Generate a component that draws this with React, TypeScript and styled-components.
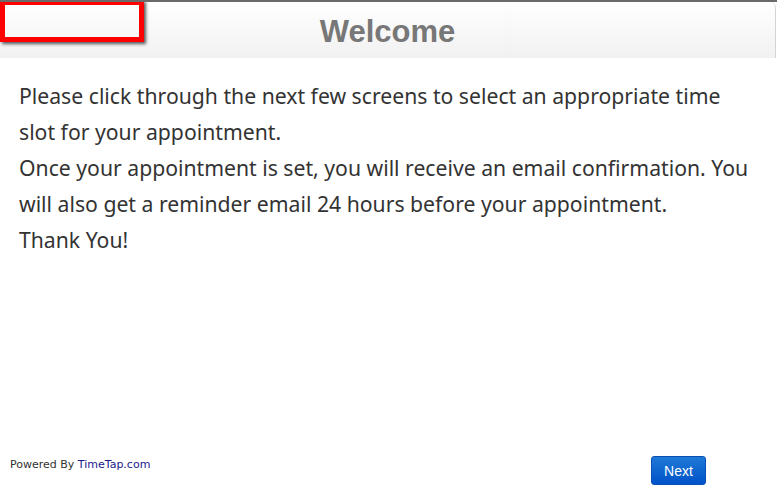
import React from "react";
import styled, { createGlobalStyle } from "styled-components";

const GlobalStyle = createGlobalStyle`
    html, body {
        margin: 0;
        padding: 0;
        height: 100%;
        background: #ffffff;
    }

    #root {
        height: 100%;
    }
`;

const Page = styled.div`
    display: flex;
    flex-direction: column;
    height: 100vh;
    box-sizing: border-box;
    border-top: 2px solid #6a6a6a;
    overflow: hidden;
`;

const Header = styled.header`
    display: grid;
    grid-template-columns: 1fr auto 1fr;
    align-items: center;
    height: 56px;
    margin-right: 1px;
    border-right: 1px solid #d4d4d4;
    border-top-right-radius: 6px;
    background: linear-gradient(to bottom, #ffffff 0%, #f1f1f1 100%);
`;

const LogoFrame = styled.div`
    align-self: start;
    width: 134px;
    height: 32px;
    margin-top: -2px;
    border: 5px solid #ff0000;
    box-shadow: 2px 2px 3px rgba(0, 0, 0, 0.65);
`;

const Title = styled.h1`
    margin: 0;
    padding-top: 3px;
    font-family: "Liberation Sans", Arial, sans-serif;
    font-size: 31px;
    font-weight: bold;
    color: #777777;
`;

const Content = styled.main`
    flex: 1;
    width: 734px;
    padding: 20px 19px 0 19px;
    font-family: "Noto Sans", "Open Sans", sans-serif;
    font-size: 21.2px;
    line-height: 36px;
    color: #333333;

    p {
        margin: 0;
    }
`;

const Footer = styled.footer`
    display: flex;
    justify-content: space-between;
    align-items: flex-start;
    padding: 14px 71px 12px 10px;
`;

const PoweredBy = styled.div`
    padding-top: 2px;
    font-family: "DejaVu Sans", Verdana, sans-serif;
    font-size: 11px;
    color: #333333;

    a {
        color: #1a1a8c;
        text-decoration: none;
    }
`;

const NextButton = styled.button`
    width: 55px;
    height: 29px;
    padding: 0;
    border: 1px solid #0a4fb8;
    border-radius: 3px;
    background: linear-gradient(to bottom, #1f7ad6 0%, #0052c9 100%);
    color: #ffffff;
    font-family: "Liberation Sans", Arial, sans-serif;
    font-size: 14px;
    cursor: pointer;
`;

export default function App() {
    return (
        <>
            <GlobalStyle />
            <Page>
                <Header>
                    <LogoFrame />
                    <Title>Welcome</Title>
                    <div />
                </Header>
                <Content>
                    <p>
                        Please click through the next few screens to select an appropriate time
                        slot for your appointment.
                    </p>
                    <p>
                        Once your appointment is set, you will receive an email confirmation. You
                        will also get a reminder email 24 hours before your appointment.
                    </p>
                    <p>Thank You!</p>
                </Content>
                <Footer>
                    <PoweredBy>
                        Powered By <a href="#">TimeTap.com</a>
                    </PoweredBy>
                    <NextButton type="button">Next</NextButton>
                </Footer>
            </Page>
        </>
    );
}
